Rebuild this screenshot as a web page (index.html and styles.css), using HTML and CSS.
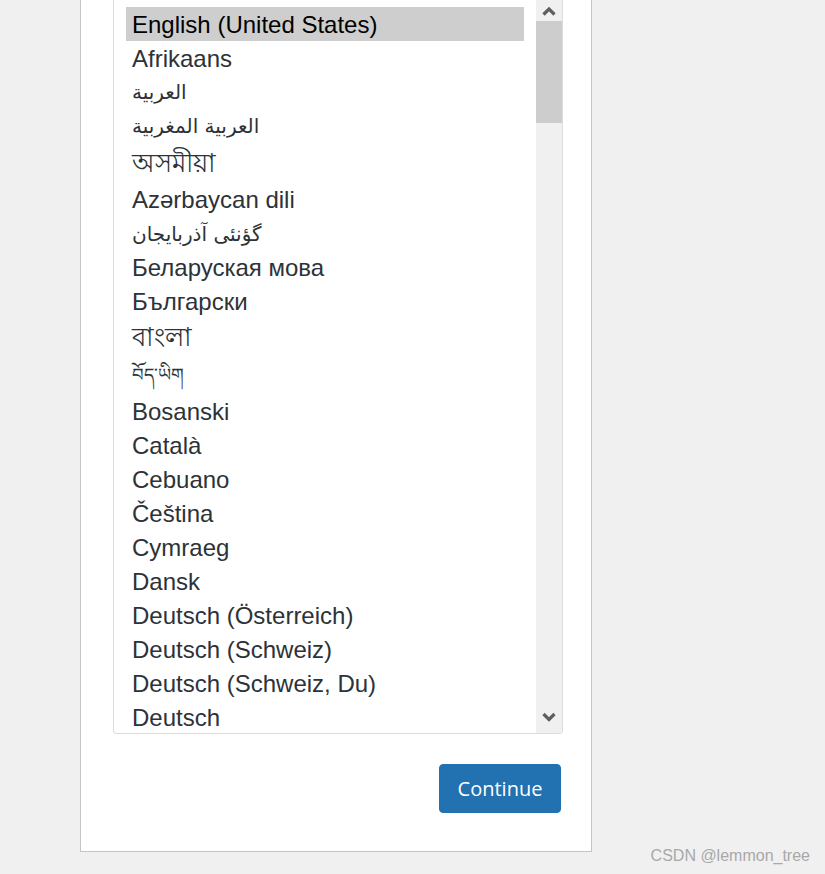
FILE: index.html
```html
<!DOCTYPE html>
<html lang="en">
<head>
<meta charset="utf-8">
<title>WordPress › Installation</title>
<link rel="stylesheet" href="styles.css">
</head>
<body>
<div class="page">
  <form class="card">
    <div class="language-select">
      <div class="options">
        <div class="option selected">English (United States)</div>
        <div class="option" lang="af">Afrikaans</div>
        <div class="option arabic row-33" lang="ar">العربية</div>
        <div class="option arabic" lang="ary">العربية المغربية</div>
        <div class="option bengali row-40" lang="as">অসমীয়া</div>
        <div class="option" lang="az">Azərbaycan dili</div>
        <div class="option arabic" lang="azb">گؤنئی آذربایجان</div>
        <div class="option" lang="bel">Беларуская мова</div>
        <div class="option" lang="bg">Български</div>
        <div class="option bengali row-36" lang="bn">বাংলা</div>
        <div class="option tibetan row-40" lang="bo">བོད་ཡིག</div>
        <div class="option" lang="bs">Bosanski</div>
        <div class="option" lang="ca">Català</div>
        <div class="option" lang="ceb">Cebuano</div>
        <div class="option" lang="cs">Čeština</div>
        <div class="option" lang="cy">Cymraeg</div>
        <div class="option" lang="da">Dansk</div>
        <div class="option" lang="de-AT">Deutsch (Österreich)</div>
        <div class="option" lang="de-CH">Deutsch (Schweiz)</div>
        <div class="option" lang="de-CH">Deutsch (Schweiz, Du)</div>
        <div class="option" lang="de">Deutsch</div>
      </div>
      <div class="scrollbar">
        <div class="scroll-btn up">
          <svg width="14" height="10" viewBox="0 0 14 10"><polyline points="1.5,8.5 7,3 12.5,8.5" fill="none" stroke="#5f5f5f" stroke-width="3.2"/></svg>
        </div>
        <div class="thumb"></div>
        <div class="track"></div>
        <div class="scroll-btn down">
          <svg width="14" height="10" viewBox="0 0 14 10"><polyline points="1.5,2 7,7.5 12.5,2" fill="none" stroke="#5f5f5f" stroke-width="3.2"/></svg>
        </div>
      </div>
    </div>
    <div class="actions">
      <button type="button" class="button-primary">Continue</button>
    </div>
  </form>
</div>
<div class="watermark">CSDN @lemmon_tree</div>
</body>
</html>
```

FILE: styles.css
```css
html, body {
  margin: 0;
  padding: 0;
}

body {
  background: #f0f0f1;
  height: 874px;
  overflow: hidden;
  font-family: "Liberation Sans", Arial, sans-serif;
}

.page {
  padding-left: 80px;
}

.card {
  width: 512px;
  background: #fff;
  border: 1px solid #c3c4c7;
  border-top: 0;
  padding: 0 28px 38px 32px;
  box-sizing: border-box;
  margin: 0;
}

.language-select {
  display: flex;
  width: 450px;
  height: 734px;
  box-sizing: border-box;
  border: 1px solid #dcdcde;
  border-top: 0;
  border-radius: 0 0 4px 4px;
  overflow: hidden;
}

.options {
  flex: 1;
  padding: 7px 12px 0 12px;
  overflow: hidden;
}

.option {
  height: 32px;
  line-height: 32px;
  padding: 2px 6px 0 6px;
  font-size: 24px;
  color: #2c3338;
  white-space: nowrap;
}

.option.selected {
  background: #cecece;
  color: #000;
}

.option.arabic {
  font-family: "DejaVu Sans", "Noto Sans", sans-serif;
  font-size: 20px;
}

.option.bengali {
  font-size: 26px;
}

.option.tibetan {
  font-size: 18px;
}

.row-33 { height: 31px; line-height: 31px; }
.row-36 { height: 34px; line-height: 34px; }
.row-40 { height: 38px; line-height: 38px; }

.scrollbar {
  width: 26px;
  display: flex;
  flex-direction: column;
  background: #f0f0f0;
}

.scroll-btn {
  display: flex;
  align-items: center;
  justify-content: center;
  height: 21px;
}

.scroll-btn.down {
  height: 33px;
}

.thumb {
  height: 102px;
  background: #cdcdcd;
}

.track {
  flex: 1;
}

.actions {
  display: flex;
  justify-content: flex-end;
  margin-top: 30px;
}

.button-primary {
  width: 122px;
  height: 49px;
  margin-right: 2px;
  background: #2271b1;
  border: 1px solid #2271b1;
  border-radius: 4px;
  color: #fff;
  font-family: "Open Sans", "Noto Sans", sans-serif;
  font-size: 20px;
  padding: 0;
  cursor: pointer;
}

.watermark {
  position: absolute;
  right: 15px;
  top: 847px;
  font-family: "Liberation Sans", Arial, sans-serif;
  font-size: 16px;
  line-height: 18px;
  color: #a8a8a8;
}
```
